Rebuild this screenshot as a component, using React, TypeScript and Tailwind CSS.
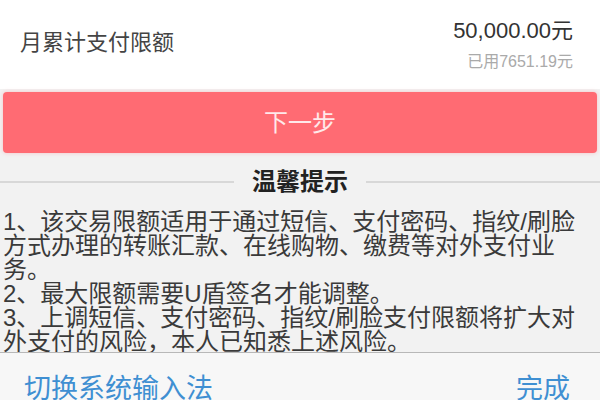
import React from 'react';

const tips = [
  '1、该交易限额适用于通过短信、支付密码、指纹/刷脸',
  '方式办理的转账汇款、在线购物、缴费等对外支付业',
  '务。',
  '2、最大限额需要U盾签名才能调整。',
  '3、上调短信、支付密码、指纹/刷脸支付限额将扩大对',
  '外支付的风险，本人已知悉上述风险。',
];

export default function App() {
  return (
    <div
      className="w-[600px] h-[400px] overflow-hidden bg-[#f2f2f2] flex flex-col"
      style={{ fontFamily: '"Liberation Sans", "Noto Sans CJK SC", sans-serif' }}
    >
      {/* limit row */}
      <div className="h-[89px] shrink-0 bg-white flex items-center justify-between pl-[20px] pr-[27px]">
        <span className="text-[22px] text-[#444] mt-[-4px]">月累计支付限额</span>
        <div className="flex flex-col items-end">
          <span className="text-[22px] leading-[26px] text-[#333]">50,000.00元</span>
          <span className="text-[16px] leading-[20px] mt-[8px] text-[#aaa]">已用7651.19元</span>
        </div>
      </div>

      {/* next button */}
      <div className="px-[3px] pt-[3px] shrink-0">
        <button className="w-full h-[61px] rounded-[4px] bg-[#ff6b73] text-[24px] text-white/85 shadow-[0_0_4px_rgba(255,107,115,0.35)]">
          下一步
        </button>
      </div>

      {/* tips title */}
      <div className="h-[57px] shrink-0 flex items-center gap-[18px]">
        <div className="flex-1 h-[2px] bg-[#d8d8d8]" />
        <span className="text-[24px] font-bold text-[#222]">温馨提示</span>
        <div className="flex-1 h-[2px] bg-[#d8d8d8]" />
      </div>

      {/* tips text */}
      <div className="flex-1 overflow-hidden px-[3px] text-[24px] leading-[24px] text-[#3a3a3a]">
        {tips.map((line) => (
          <div key={line} className="whitespace-nowrap">
            {line}
          </div>
        ))}
      </div>

      {/* keyboard toolbar */}
      <div className="h-[48px] shrink-0 border-t border-[#b8b8b8] bg-[#f7f7f7] flex items-start justify-between pl-[24px] pr-[30px] pt-[16px] text-[27px] text-[#3f8fd2]">
        <span>切换系统输入法</span>
        <span>完成</span>
      </div>
    </div>
  );
}
